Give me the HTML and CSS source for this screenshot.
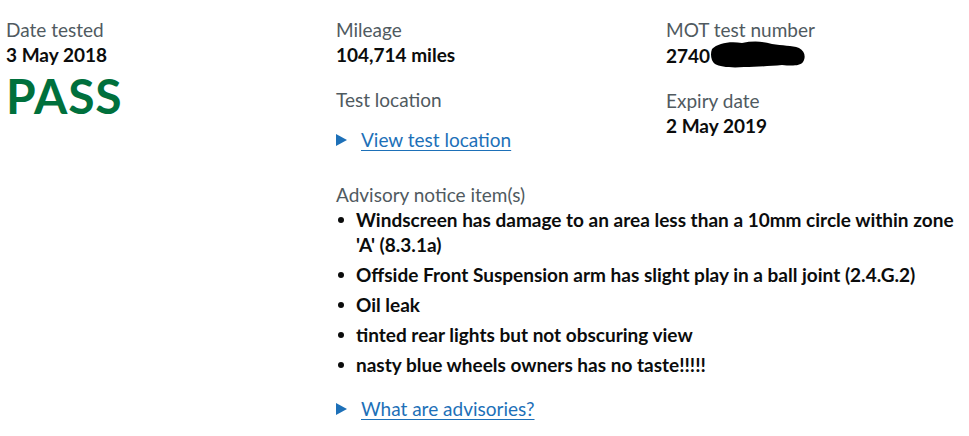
FILE: index.html
```html
<!DOCTYPE html>
<html lang="en">
<head>
<meta charset="utf-8">
<title>MOT history</title>
<link rel="stylesheet" href="styles.css">
</head>
<body>
<div class="result">
  <div class="col col-date">
    <div class="label">Date tested</div>
    <div class="value">3 May 2018</div>
    <div class="status">PASS</div>
  </div>
  <div class="col col-mid">
    <div class="label">Mileage</div>
    <div class="value">104,714 miles</div>
    <div class="label gap">Test location</div>
    <div class="details"><span class="arrow"></span><a href="#" class="link">View test location</a></div>
  </div>
  <div class="col col-right">
    <div class="label">MOT test number</div>
    <div class="value">2740<svg class="redact" width="96" height="28" viewBox="0 0 96 28"><path d="M2 9 C8 3 20 1 32 3 C42 1 52 1 62 4 C72 6 82 5 89 8 C95 11 96 17 93 22 C90 26 82 26 72 25 C60 26 46 27 34 27 C22 28 10 27 5 24 C1 21 0 14 2 9 Z" fill="#000"/></svg></div>
    <div class="label gap">Expiry date</div>
    <div class="value">2 May 2019</div>
  </div>
  <div class="col col-adv">
    <div class="label">Advisory notice item(s)</div>
    <ul class="items">
      <li>Windscreen has damage to an area less than a 10mm circle within zone 'A' (8.3.1a)</li>
      <li>Offside Front Suspension arm has slight play in a ball joint (2.4.G.2)</li>
      <li>Oil leak</li>
      <li>tinted rear lights but not obscuring view</li>
      <li>nasty blue wheels owners has no taste!!!!!</li>
    </ul>
    <div class="details"><span class="arrow"></span><a href="#" class="link">What are advisories?</a></div>
  </div>
</div>
</body>
</html>
```
FILE: styles.css
```css
html, body {
  margin: 0;
  padding: 0;
  background: #fff;
}
body {
  font-family: Lato, "Liberation Sans", Arial, sans-serif;
  font-size: 19px;
  line-height: 25px;
  color: #0b0c0c;
}
.result {
  display: grid;
  grid-template-columns: 330px 330px 1fr;
  padding: 17px 6px 0 6px;
}
.col-date { grid-column: 1; grid-row: 1; }
.col-mid { grid-column: 2; grid-row: 1; }
.col-right { grid-column: 3; grid-row: 1; }
.col-adv { grid-column: 2 / span 2; grid-row: 2; padding-top: 30px; }
.label {
  color: #505a5f;
}
.label.gap { margin-top: 20px; }
.value {
  font-weight: 700;
  display: flex;
  align-items: center;
}
.redact { margin-top: -2px; }
.status {
  color: #00703c;
  font-weight: 700;
  font-size: 48px;
  line-height: 50px;
  margin-top: 4px;
  letter-spacing: 0.8px;
}
.details {
  display: flex;
  align-items: center;
  gap: 14px;
  margin-top: 15px;
}
.arrow {
  width: 0;
  height: 0;
  border-style: solid;
  border-width: 6.5px 0 6.5px 11px;
  border-color: transparent transparent transparent #1d70b8;
}
.link {
  color: #1d70b8;
  text-decoration: underline;
  text-underline-offset: 3px;
}
.items {
  list-style: none;
  margin: 0;
  padding: 0;
  font-weight: 700;
}
.items li {
  position: relative;
  padding-left: 20px;
  margin-bottom: 5px;
}
.items li::before {
  content: "";
  position: absolute;
  left: 2px;
  top: 10px;
  width: 6px;
  height: 6px;
  border-radius: 50%;
  background: #0b0c0c;
}
.col-adv .details { margin-top: 19px; }
```
